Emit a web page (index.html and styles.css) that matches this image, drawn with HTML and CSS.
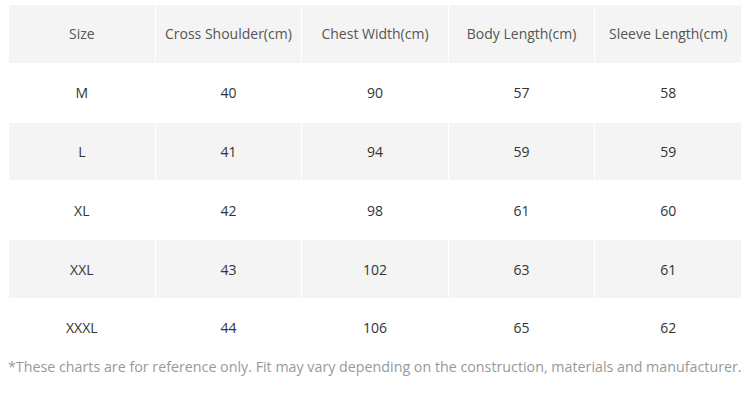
FILE: index.html
```html
<!DOCTYPE html>
<html>
<head>
<meta charset="utf-8">
<link rel="stylesheet" href="styles.css">
</head>
<body>
<table class="chart">
  <tr class="shade head"><td>Size</td><td>Cross Shoulder(cm)</td><td>Chest Width(cm)</td><td>Body Length(cm)</td><td>Sleeve Length(cm)</td></tr>
  <tr><td>M</td><td>40</td><td>90</td><td>57</td><td>58</td></tr>
  <tr class="shade"><td>L</td><td>41</td><td>94</td><td>59</td><td>59</td></tr>
  <tr><td>XL</td><td>42</td><td>98</td><td>61</td><td>60</td></tr>
  <tr class="shade"><td>XXL</td><td>43</td><td>102</td><td>63</td><td>61</td></tr>
  <tr><td>XXXL</td><td>44</td><td>106</td><td>65</td><td>62</td></tr>
</table>
<p class="note">*These charts are for reference only. Fit may vary depending on the construction, materials and manufacturer.</p>
</body>
</html>
```
FILE: styles.css
```css
html, body { background: #fff; }
body {
  margin: 4px 8px 0;
  font-family: "Open Sans", "Liberation Sans", sans-serif;
}
.chart {
  width: 100%;
  border-collapse: collapse;
  table-layout: fixed;
}
.chart td {
  height: 57.8px;
  padding: 0;
  border: 1px solid #fff;
  text-align: center;
  vertical-align: middle;
  font-size: 14px;
  color: #333;
}
.chart .shade td { background: #f4f4f4; }
.chart .head td { color: #555; }
.note {
  margin: 0;
  margin-top: -1px;
  font-size: 14.28px;
  color: #999;
  white-space: nowrap;
}
```
